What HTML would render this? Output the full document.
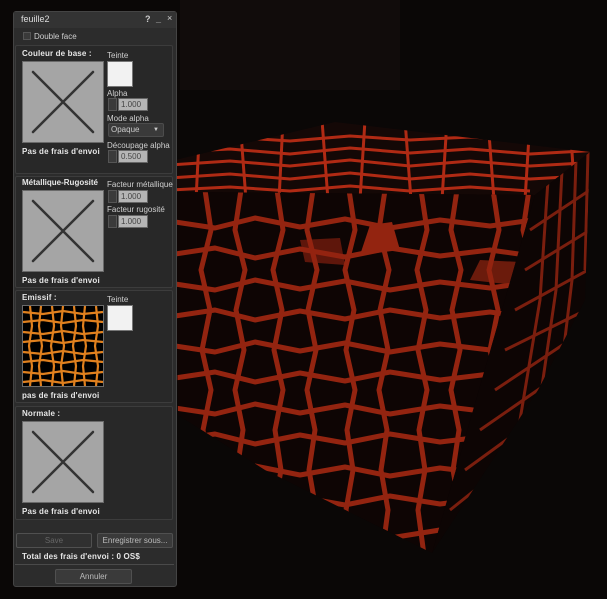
<!DOCTYPE html>
<html><head><meta charset="utf-8">
<style>
*{margin:0;padding:0;box-sizing:border-box}
body{width:607px;height:599px;overflow:hidden;background:#0a0706;font-family:"Liberation Sans","DejaVu Sans",sans-serif;position:relative}
.a{position:absolute}
.t{position:absolute;color:#cfcfcf;font-size:8px;white-space:nowrap;line-height:9px}
.b{font-weight:bold;color:#e6e6e6;letter-spacing:0.15px;font-size:8px}
.sec{position:absolute;left:15px;width:158px;background:#282828;border:1px solid #3c3c3c;border-radius:2px}
.img{position:absolute;left:22px;width:82px;height:82px;background:#a5a5a5;border:1px solid #6a6a6a}
.sw{position:absolute;left:107px;width:26px;height:26px;background:#f2f2f2;border:1px solid #777}
.spin{position:absolute;left:108px;width:9px;height:13px;background:#3a3a3a;border:1px solid #555}
.inp{position:absolute;left:118px;width:30px;height:13px;background:#b5b5b5;border:1px solid #666;color:#444;font-size:8px;line-height:11px;padding-left:2px}
.btn{position:absolute;height:15px;background:#3a3a3a;border:1px solid #505050;border-radius:2px;color:#bbb;font-size:8px;text-align:center;line-height:13px}
</style></head><body>
<svg class="a" style="left:0;top:0" width="607" height="599">
<defs>
<clipPath id="cf"><polygon points="175,192 535,195 432,553 265,470 178,415"/></clipPath>
<clipPath id="ct"><polygon points="175,160 335,122 590,152 535,195 175,192"/></clipPath>
<clipPath id="cr"><polygon points="535,195 590,152 585,300 538,390 432,553"/></clipPath>
</defs>
<rect x="180" y="0" width="220" height="90" fill="#110c0b"/>
<!-- top face -->
<polygon points="175,160 335,122 590,152 535,195 175,192" fill="#140806"/>
<g clip-path="url(#ct)" stroke="#b02a14" stroke-width="3" fill="none" stroke-linejoin="round">
<path d="M170 140 L230 137 L290 141 L350 136 L410 140 L470 137 L530 141 L600 138"/>
<path d="M170 152 L230 149 L290 154 L350 148 L410 153 L470 149 L530 154 L600 150"/>
<path d="M170 165 L230 161 L290 166 L350 160 L410 166 L470 161 L530 166 L600 162"/>
<path d="M170 178 L230 174 L290 179 L350 173 L410 179 L470 174 L530 179 L600 175"/>
<path d="M170 190 L230 187 L290 191 L350 186 L410 191 L470 187 L530 191"/>
<path d="M200 120 L196 200 M240 120 L246 200 M283 120 L279 200 M322 120 L328 200 M365 120 L360 200 M405 120 L411 200 M447 120 L442 200 M488 120 L494 200 M530 120 L525 200 M570 120 L575 200"/>
</g>
<!-- front face -->
<polygon points="175,192 535,195 432,553 265,470 178,415" fill="#120705"/>
<g clip-path="url(#cf)" stroke="#b42c14" stroke-width="5" fill="none" stroke-linejoin="round">
<path d="M175 222 L215 228 L255 218 L300 227 L345 219 L390 228 L440 220 L490 226 L540 219"/>
<path d="M175 254 L215 248 L255 258 L300 249 L345 257 L390 248 L440 256 L490 250 L540 257"/>
<path d="M175 284 L215 290 L255 280 L300 289 L345 281 L390 290 L440 282 L490 288 L540 281"/>
<path d="M175 316 L215 310 L255 320 L300 311 L345 319 L390 310 L440 318 L490 312 L540 319"/>
<path d="M175 346 L215 352 L255 342 L300 351 L345 343 L390 352 L440 344 L490 350 L540 343"/>
<path d="M175 378 L215 372 L255 382 L300 373 L345 381 L390 372 L440 380 L490 374 L540 381"/>
<path d="M175 408 L215 414 L255 404 L300 413 L345 405 L390 414 L440 406 L490 412 L540 405"/>
<path d="M175 440 L215 434 L255 444 L300 435 L345 443 L390 434 L440 442 L490 436 L540 443"/>
<path d="M175 470 L215 476 L255 466 L300 475 L345 467 L390 476 L440 468 L490 474 L540 467"/>
<path d="M175 502 L215 496 L255 506 L300 497 L345 505 L390 496 L440 504 L490 498 L540 505"/>
<path d="M175 532 L215 538 L255 528 L300 537 L345 529 L390 538 L440 530 L490 536 L540 529"/>
<path d="M205 190 L211 230 L201 270 L210 310 L202 350 L211 390 L203 430 L209 470 L202 510 L208 555"/>
<path d="M241 190 L235 230 L245 270 L236 310 L244 350 L235 390 L243 430 L237 470 L244 510 L238 555"/>
<path d="M277 190 L283 230 L273 270 L282 310 L274 350 L283 390 L275 430 L281 470 L274 510 L280 555"/>
<path d="M313 190 L307 230 L317 270 L308 310 L316 350 L307 390 L315 430 L309 470 L316 510 L310 555"/>
<path d="M349 190 L355 230 L345 270 L354 310 L346 350 L355 390 L347 430 L353 470 L346 510 L352 555"/>
<path d="M385 190 L379 230 L389 270 L380 310 L388 350 L379 390 L387 430 L381 470 L388 510 L382 555"/>
<path d="M421 190 L427 230 L417 270 L426 310 L418 350 L427 390 L419 430 L425 470 L418 510 L424 555"/>
<path d="M457 190 L451 230 L461 270 L452 310 L460 350 L451 390 L459 430 L453 470 L460 510 L454 555"/>
<path d="M493 190 L499 230 L489 270 L498 310 L490 350 L499 390 L491 430 L497 470 L490 510 L496 555"/>
<path d="M529 190 L523 230 L533 270 L524 310 L532 350"/>
</g>
<g clip-path="url(#cf)" fill="#b42c14">
<polygon points="370,225 392,222 400,250 360,255"/>
<polygon points="300,240 340,238 345,265 305,262" opacity="0.6"/>
<polygon points="480,260 520,262 515,285 470,280" opacity="0.7"/>
</g>
<polygon points="175,192 535,195 432,553 265,470 178,415" fill="#000" opacity="0.18"/>
<!-- right face -->
<polygon points="535,195 590,152 585,300 538,390 432,553" fill="#0d0504"/>
<g clip-path="url(#cr)" stroke="#7a1e0e" stroke-width="3" fill="none">
<path d="M548 180 L540 300 L520 420 L480 540 M562 170 L556 290 L540 400 L505 510 M576 160 L572 280 L560 380 M588 152 L585 270"/>
<path d="M530 230 L590 190 M525 270 L590 230 M515 310 L588 270 M505 350 L586 310 M495 390 L570 340 M480 430 L545 385 M465 470 L520 430 M450 510 L500 470"/>
</g>
</svg>

<div class="a" style="left:13px;top:11px;width:164px;height:576px;background:#2c2c2c;border:1px solid #444;border-radius:3px"></div>
<div class="a" style="left:14px;top:12px;width:162px;height:16px;background:#333"></div>
<div class="t" style="left:21px;top:15px;font-size:9px;color:#ddd">feuille2</div>
<div class="t" style="left:145px;top:15px;font-size:9px;color:#ccc;font-weight:bold">?</div>
<div class="t" style="left:156px;top:15px;font-size:9px;color:#ccc;font-weight:bold">_</div>
<div class="t" style="left:167px;top:14px;font-size:9px;color:#ccc">×</div>
<div class="a" style="left:23px;top:32px;width:8px;height:8px;background:#3a3a3a;border:1px solid #555"></div>
<div class="t" style="left:34px;top:32px">Double face</div>

<div class="sec" style="top:45px;height:129px"></div>
<div class="t b" style="left:22px;top:49px">Couleur de base :</div>
<div class="img" style="top:61px"><svg width="80" height="80"><path d="M10 10L70 70M70 10L10 70" stroke="#333" stroke-width="2.5" stroke-linecap="round"/></svg></div>
<div class="t b" style="left:22px;top:147px">Pas de frais d'envoi</div>
<div class="t" style="left:107px;top:51px">Teinte</div>
<div class="sw" style="top:61px"></div>
<div class="t" style="left:107px;top:89px">Alpha</div>
<div class="spin" style="top:98px"></div><div class="inp" style="top:98px">1.000</div>
<div class="t" style="left:107px;top:114px">Mode alpha</div>
<div class="a" style="left:108px;top:123px;width:56px;height:14px;background:#3a3a3a;border:1px solid #4c4c4c;border-radius:2px;color:#ccc;font-size:8px;line-height:12px;padding-left:2px">Opaque<span style="position:absolute;right:4px;top:0;font-size:6px">▼</span></div>
<div class="t" style="left:107px;top:141px">Découpage alpha</div>
<div class="spin" style="top:150px"></div><div class="inp" style="top:150px">0.500</div>

<div class="sec" style="top:176px;height:112px"></div>
<div class="t b" style="left:22px;top:178px;letter-spacing:0">Métallique-Rugosité</div>
<div class="img" style="top:190px"><svg width="80" height="80"><path d="M10 10L70 70M70 10L10 70" stroke="#333" stroke-width="2.5" stroke-linecap="round"/></svg></div>
<div class="t b" style="left:22px;top:276px">Pas de frais d'envoi</div>
<div class="t" style="left:107px;top:180px">Facteur métallique</div>
<div class="spin" style="top:190px"></div><div class="inp" style="top:190px">1.000</div>
<div class="t" style="left:107px;top:205px">Facteur rugosité</div>
<div class="spin" style="top:215px"></div><div class="inp" style="top:215px">1.000</div>

<div class="sec" style="top:290px;height:113px"></div>
<div class="t b" style="left:22px;top:293px">Emissif :</div>
<div class="img" style="top:305px;background:#000"><svg width="80" height="80"><g stroke="#e0801e" stroke-width="2.2" fill="none">
<path d="M0 6 L20 8 L40 5 L60 8 L80 6 M0 16 L20 14 L40 17 L60 14 L80 16 M0 26 L20 28 L40 25 L60 28 L80 26 M0 36 L20 34 L40 37 L60 34 L80 36 M0 46 L20 48 L40 45 L60 48 L80 46 M0 56 L20 54 L40 57 L60 54 L80 56 M0 66 L20 68 L40 65 L60 68 L80 66 M0 76 L20 74 L40 77 L60 74 L80 76"/>
<path d="M7 0 L9 20 L6 40 L9 60 L7 80 M18 0 L16 20 L19 40 L16 60 L18 80 M29 0 L31 20 L28 40 L31 60 L29 80 M40 0 L38 20 L41 40 L38 60 L40 80 M51 0 L53 20 L50 40 L53 60 L51 80 M62 0 L60 20 L63 40 L60 60 L62 80 M73 0 L75 20 L72 40 L75 60 L73 80"/>
</g></svg></div>
<div class="t b" style="left:22px;top:391px">pas de frais d'envoi</div>
<div class="t" style="left:107px;top:295px">Teinte</div>
<div class="sw" style="top:305px"></div>

<div class="sec" style="top:406px;height:114px"></div>
<div class="t b" style="left:22px;top:409px">Normale :</div>
<div class="img" style="top:421px"><svg width="80" height="80"><path d="M10 10L70 70M70 10L10 70" stroke="#333" stroke-width="2.5" stroke-linecap="round"/></svg></div>
<div class="t b" style="left:22px;top:507px">Pas de frais d'envoi</div>

<div class="btn" style="left:16px;top:533px;width:76px;color:#666;background:#303030">Save</div>
<div class="btn" style="left:97px;top:533px;width:76px">Enregistrer sous...</div>
<div class="t b" style="left:22px;top:552px">Total des frais d'envoi : 0 OS$</div>
<div class="a" style="left:15px;top:564px;width:159px;height:1px;background:#4a4a4a"></div>
<div class="btn" style="left:55px;top:569px;width:77px">Annuler</div>
</body></html>
